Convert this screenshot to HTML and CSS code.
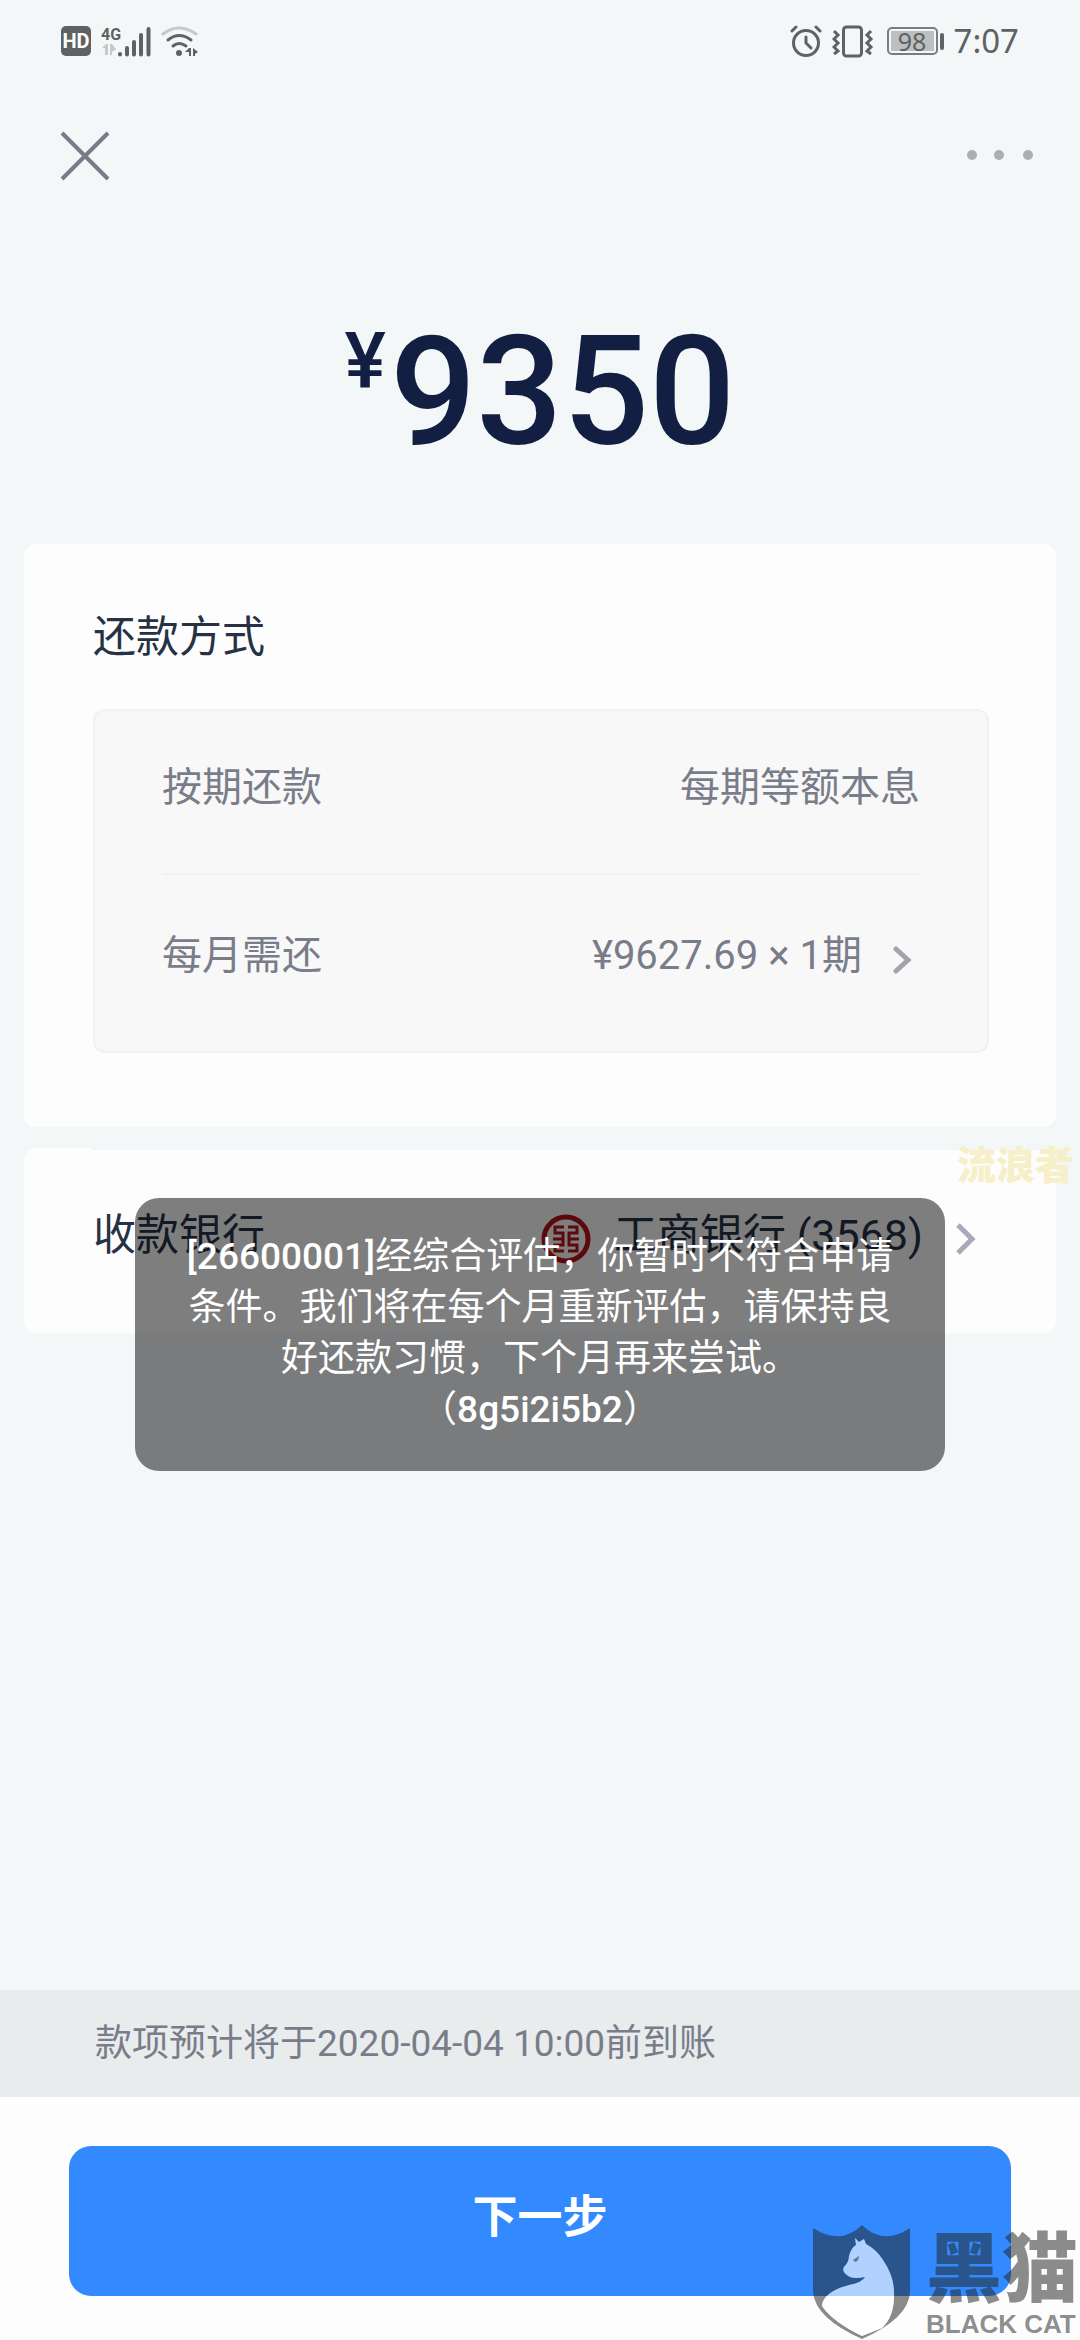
FILE: index.html
```html
<!DOCTYPE html>
<html lang="zh-CN">
<head>
    <meta charset="UTF-8">
    <meta name="viewport" content="width=device-width, initial-scale=1.0">
    <link rel="stylesheet" href="styles.css">
    <title>借款</title>
</head>
<body>
    <div class="page">
        <div class="status-bar">
            <div class="status-left">
                <span class="hd">HD</span>
                <svg class="signal" width="50" height="34" viewBox="0 0 50 34">
                    <text x="0" y="16" class="net">4G</text>
                    <path d="M0 25l5-5h2v11h-3v-7h-4zM9 20h2l4 5-4 3v3h-2z" fill="#c6c8c9"/>
                    <path d="M19 30v.5M26 24v6.500M33 18v12.500M40 11v19.500M47.500 5v25.500" stroke="#606162" stroke-width="4" stroke-linecap="round"/>
                </svg>
                <svg class="wifi" width="38" height="34" viewBox="0 0 38 34">
                    <g fill="none" stroke="#606162" stroke-width="3" stroke-linecap="round">
                        <path d="M2 10Q18 -2 35 10" stroke="#c6c8c9"/>
                        <path d="M7 16Q18 7 30 16"/>
                        <path d="M12 22Q18 17 25 22"/>
                    </g>
                    <circle cx="18" cy="29" r="3" fill="#606162"/>
                    <path d="M24 28l4-4h2v8h-2v-4zM32 24l5 4-3 2v2h-2z" fill="#606162"/>
                </svg>
            </div>
            <div class="status-right">
                <svg width="32" height="34" viewBox="0 0 32 34" fill="none" stroke="#606162" stroke-width="3" stroke-linecap="round">
                    <circle cx="16" cy="19" r="12.500"/>
                    <path d="M16 13v6l5 5M2 7l4-4M30 7l-4-4"/>
                </svg>
                <svg width="42" height="34" viewBox="0 0 42 34" fill="none" stroke="#606162" stroke-width="3">
                    <rect x="11.500" y="3" width="18" height="29" rx="3"/>
                    <path d="M2 7l4 4-4 4 4 4-4 4 4 4-4 3M39 7l-4 4 4 4-4 4 4 4-4 4 4 3"/>
                </svg>
                <div class="battery"><span>98</span></div>
                <span class="time">7:07</span>
            </div>
        </div>

        <div class="nav">
            <button class="icon-button" aria-label="关闭">
                <svg width="50" height="50" viewBox="0 0 50 50" stroke="#777a89" stroke-width="4">
                    <path d="M2 2L48 48M48 2L2 48"/>
                </svg>
            </button>
            <button class="icon-button" aria-label="更多">
                <svg width="68" height="12" viewBox="0 0 68 12" fill="#adaeb0">
                    <circle cx="6" cy="5" r="5"/>
                    <circle cx="33" cy="5" r="5"/>
                    <circle cx="62" cy="5" r="5"/>
                </svg>
            </button>
        </div>

        <div class="amount">
            <span class="currency">¥</span>
            <span class="number">9350</span>
        </div>

        <div class="card">
            <h2>还款方式</h2>
            <div class="plan">
                <div class="plan-row">
                    <span>按期还款</span>
                    <span>每期等额本息</span>
                </div>
                <div class="plan-row">
                    <span>每月需还</span>
                    <span class="plan-value">
                        ¥9627.69 × 1期
                        <svg class="arrow" width="20" height="28" viewBox="0 0 20 28" fill="none" stroke="#a3a3ad" stroke-width="5" stroke-linecap="round">
                            <path d="M4 3L16 14L4 25"/>
                        </svg>
                    </span>
                </div>
            </div>
        </div>

        <div class="card bank">
            <h2>收款银行</h2>
            <div class="bank-value">
                <svg class="arrow" width="50" height="50" viewBox="0 0 50 50" fill="none" stroke="#b8121c">
                    <circle cx="25" cy="25" r="22" stroke-width="5"/>
                    <path d="M23 13H14V19H22V25H12M23 37H14V31H22V25M27 13H36V19H28V25H38M27 37H36V31H28V25" stroke-width="3"/>
                </svg>
                <span class="bank-name">工商银行 (3568)</span>
                <svg class="arrow" width="20" height="34" viewBox="0 0 20 34" fill="none" stroke="#a9a9b8" stroke-width="5">
                    <path d="M2 3L16 17L2 31"/>
                </svg>
            </div>
        </div>

        <div class="footer">
            <p class="notice">款项预计将于2020-04-04 10:00前到账</p>
            <div class="action">
                <button class="next">下一步</button>
            </div>
        </div>

        <div class="toast">
            <b>[26600001]</b>经综合评估，你暂时不符合申请<br>
            条件。我们将在每个月重新评估，请保持良<br>
            好还款习惯，下个月再来尝试。<br>
            （<b>8g5i2i5b2</b>）
        </div>

        <div class="user-mark">流浪者</div>

        <div class="brand-mark">
            <svg width="98" height="116" viewBox="0 0 98 116">
                <path class="shield" fill-rule="evenodd" d="M0 4Q28 22 49 1Q70 22 97 4V68Q96 94 49 115Q2 94 0 68ZM42 14L46 18L51 15L53 20Q64 26 70 36Q81 52 81 68Q82 92 69 104L49 112Q20 98 9 82Q10 68 36 61Q50 58 52 53Q42 55 37 53Q28 48 31 43Q36 38 36 32Q38 24 43 21Z"/>
                <path class="cat" d="M42 14L46 18L51 15L53 20Q64 26 70 36Q81 52 81 68Q82 92 69 104L49 112Q20 98 9 82Q10 68 36 61Q50 58 52 53Q42 55 37 53Q28 48 31 43Q36 38 36 32Q38 24 43 21Z"/>
                <path class="shield" d="M40 36l6-4q0 5-4 6z"/>
            </svg>
            <div class="brand-text">
                <span class="brand-cn">黑猫</span>
                <span class="brand-en">BLACK CAT</span>
            </div>
        </div>
    </div>
</body>
</html>
```
FILE: styles.css
```css
* {
    box-sizing: border-box;
}

body {
    margin: 0;
    background-color: #f3f7f8;
    color: #263244;
    font-family: Roboto, "Noto Sans CJK SC", sans-serif;
}

svg {
    display: block;
    flex: none;
}

h2 {
    margin: 0;
    font-size: 43px;
    font-weight: 400;
    line-height: 64px;
}

.page {
    position: relative;
    display: flex;
    flex-direction: column;
    min-height: 100vh;
    overflow: hidden;
}

/* status bar */
.status-bar {
    display: flex;
    justify-content: space-between;
    align-items: center;
    height: 82px;
    padding: 0 61px;
    color: #606162;
    font-family: "Noto Sans", sans-serif;
}

.status-left,
.status-right {
    display: flex;
    align-items: center;
    gap: 10px;
}

.hd {
    width: 30px;
    border-radius: 5px;
    background-color: #606162;
    color: #fff;
    font-family: Roboto, sans-serif;
    font-size: 20px;
    font-weight: 700;
    line-height: 30px;
    text-align: center;
}

.net {
    fill: #606162;
    font-family: Roboto, sans-serif;
    font-size: 16px;
    font-weight: 700;
}

.battery {
    position: relative;
    width: 51px;
    height: 28px;
    margin: 0 6px 0 3px;
    padding: 2px;
    border: 2px solid #7b7c7d;
    border-radius: 5px;
    font-size: 25px;
    line-height: 20px;
    text-align: center;
}

.battery span {
    display: block;
    background-color: #bcbebf;
}

.battery::after {
    content: "";
    position: absolute;
    top: 4px;
    right: -8px;
    width: 4px;
    height: 17px;
    border-radius: 2px;
    background-color: #606162;
}

.time {
    font-size: 33px;
    line-height: 40px;
}

/* nav */
.nav {
    display: flex;
    justify-content: space-between;
    align-items: center;
    height: 148px;
    padding: 0 46px 0 60px;
}

.icon-button {
    padding: 0;
    border: none;
    background: none;
}

.amount {
    display: flex;
    justify-content: center;
    align-items: flex-start;
    gap: 4px;
    height: 314px;
    padding-top: 86px;
    color: #121f42;
    font-weight: 500;
}

.currency {
    margin-top: 6px;
    font-size: 78px;
    line-height: 78px;
}

.number {
    font-size: 152px;
    line-height: 152px;
}

/* cards */
.card {
    margin: 0 24px 21px;
    padding: 61px 67px 74px 69px;
    border-radius: 12px;
    background-color: #fdfdfd;
}

.plan {
    margin-top: 40px;
    padding: 0 67px;
    border: 2px solid #f1f1f1;
    border-radius: 12px;
    background-color: #f8f8f8;
    color: #797d8a;
    font-size: 40px;
    line-height: 56px;
}

.plan-row {
    display: flex;
    justify-content: space-between;
    padding: 49px 0 57px;
}

.plan-row + .plan-row {
    padding: 53px 0 67px;
    border-top: 2px solid #f1f1f1;
}

.plan-value {
    display: flex;
    align-items: center;
    gap: 30px;
    padding-right: 8px;
}

.arrow {
    margin-top: 8px;
}

.bank {
    position: relative;
    display: flex;
    justify-content: space-between;
    padding: 55px 80px 66px 69px;
}

.bank::before {
    content: "";
    position: absolute;
    top: 0;
    left: 69px;
    right: 0;
    height: 2px;
    background-color: #f4f5f6;
}

.bank-value {
    display: flex;
    align-items: center;
    height: 64px;
    font-size: 43px;
}

.bank-name {
    margin: 0 33px 0 23px;
    line-height: 64px;
}

/* footer */
.footer {
    margin-top: auto;
}

.notice {
    margin: 0;
    padding: 26px 95px 25px;
    background-color: #e9eced;
    color: #797d8a;
    font-size: 37px;
    line-height: 56px;
}

.action {
    padding: 49px 69px 44px;
    background-color: #fdfdfd;
}

.next {
    display: block;
    width: 100%;
    height: 150px;
    padding: 0 0 16px;
    border: none;
    border-radius: 22px;
    background-color: #338aff;
    color: #fff;
    font-family: inherit;
    font-size: 45px;
    font-weight: 700;
}

.toast {
    position: absolute;
    top: 1198px;
    left: 135px;
    right: 135px;
    padding: 33px 40px 36px;
    border-radius: 24px;
    background-color: rgba(0, 0, 0, 0.5);
    color: #fff;
    font-size: 37px;
    line-height: 51px;
    text-align: center;
    white-space: nowrap;
}

.toast b {
    font-weight: 500;
}

/* watermarks */
.user-mark {
    position: absolute;
    top: 1137px;
    right: 6px;
    color: #f6efc8;
    font-size: 39px;
    font-weight: 900;
    line-height: 58px;
}

.brand-mark {
    position: absolute;
    right: 2px;
    bottom: 0;
    display: flex;
    align-items: flex-end;
    gap: 15px;
    color: rgba(34, 34, 34, 0.52);
}

.shield {
    fill: rgba(34, 34, 34, 0.52);
}

.cat {
    fill: rgba(255, 255, 255, 0.62);
}

.brand-text {
    display: flex;
    flex-direction: column;
}

.brand-cn {
    font-size: 76px;
    font-weight: 900;
    line-height: 76px;
}

.brand-en {
    font-family: "Liberation Sans", Arial, sans-serif;
    font-size: 26px;
    font-weight: 700;
    line-height: 32px;
}
```
